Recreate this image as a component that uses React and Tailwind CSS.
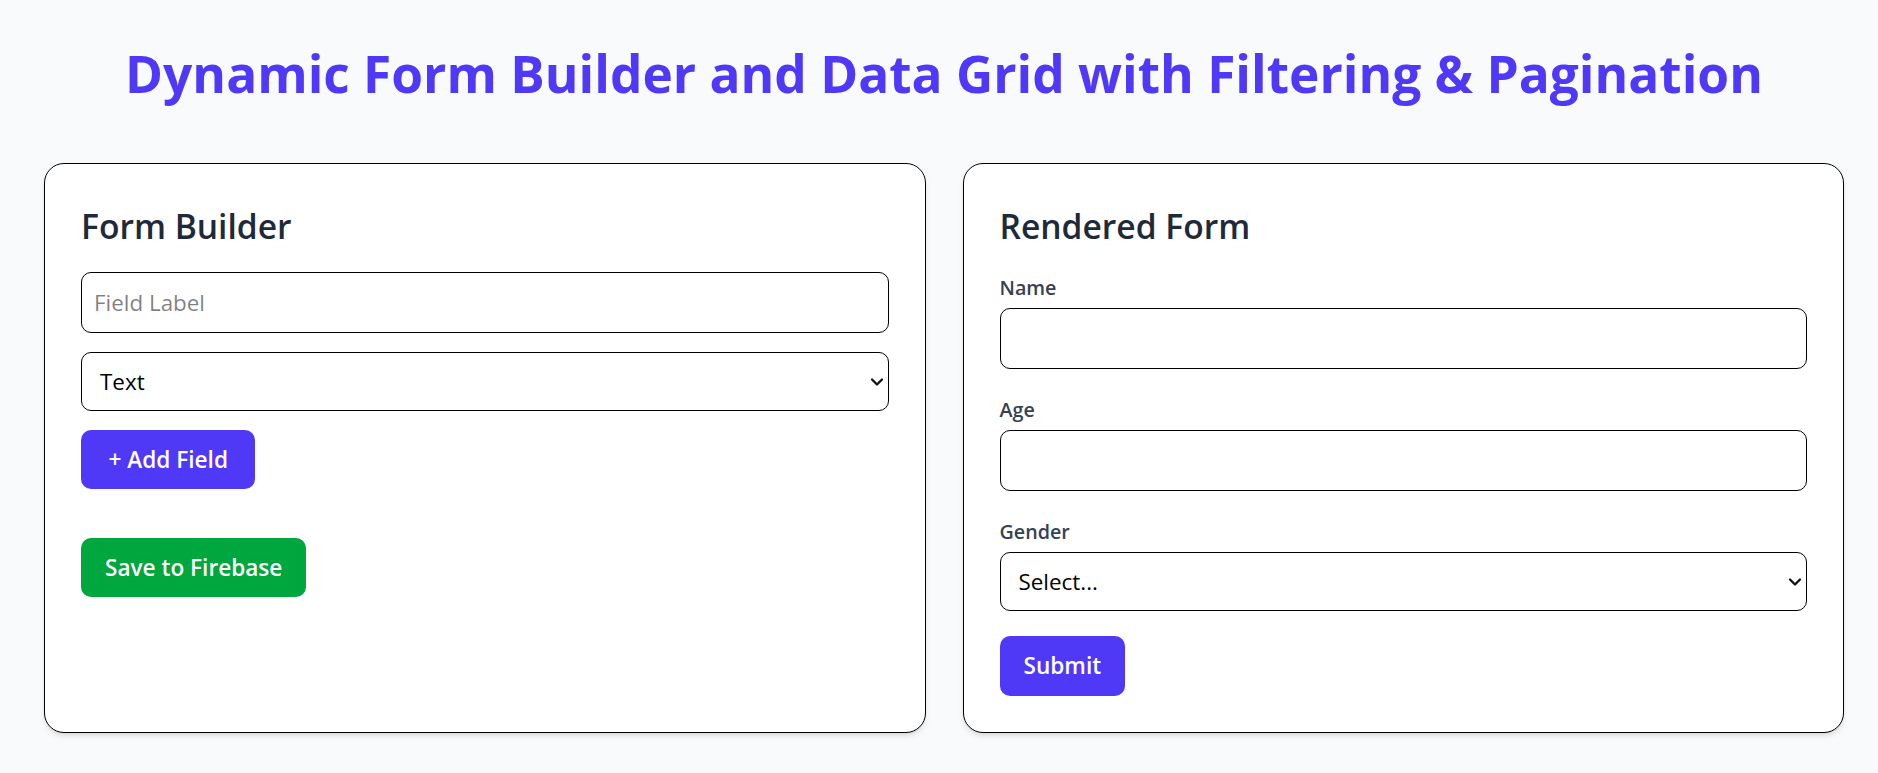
import React, { useState } from "react";

const FONT = { fontFamily: '"Open Sans", "Noto Sans", sans-serif' };

function Chevron() {
  return (
    <svg
      className="pointer-events-none absolute right-[5px] top-1/2 -translate-y-1/2"
      width="14"
      height="9"
      viewBox="0 0 14 9"
      fill="none"
      stroke="#111"
      strokeWidth="2.3"
      strokeLinecap="round"
      strokeLinejoin="round"
    >
      <polyline points="2,2 7,7 12,2" />
    </svg>
  );
}

function Select({ className = "", children, ...rest }) {
  return (
    <div className={"relative " + className}>
      <select
        {...rest}
        className="w-full h-[59px] appearance-none pl-[18px] pr-[30px] border border-black rounded-[10px] bg-white text-[22.4px] text-black"
      >
        {children}
      </select>
      <Chevron />
    </div>
  );
}

function Field({ label, type, options, last }) {
  return (
    <div className={last ? "mb-[25px]" : "mb-[26px]"}>
      <label className="block mb-[5px] text-[19.7px] leading-[30px] font-semibold text-[#364153]">
        {label}
      </label>
      {type === "select" ? (
        <Select>
          <option>Select...</option>
          {options.map((o) => (
            <option key={o}>{o}</option>
          ))}
        </Select>
      ) : (
        <input
          type={type}
          className="w-full h-[61px] px-[12px] border border-black rounded-[10px] bg-white text-[22.4px] text-black"
        />
      )}
    </div>
  );
}

export default function App() {
  const [label, setLabel] = useState("");
  const [fieldType, setFieldType] = useState("text");

  return (
    <div style={FONT} className="min-h-screen bg-[#f9fafb] pl-[44px] pr-[34px] pt-[48px] pb-10">
      <h1 className="text-center text-[51.4px] leading-none font-bold text-[#4f39f6]">
        Dynamic Form Builder and Data Grid with Filtering &amp; Pagination
      </h1>

      <div className="grid grid-cols-2 gap-[37px] mt-[64px]">
        {/* builder */}
        <div className="bg-white border border-black rounded-[20px] shadow-md px-[36px] pt-[40px] pb-[36px]">
          <h2 className="text-[33.6px] leading-[45px] font-semibold text-[#1e2939] mb-[23px]">Form Builder</h2>
          <input
            value={label}
            onChange={(e) => setLabel(e.target.value)}
            placeholder="Field Label"
            className="w-full h-[61px] px-[12px] mb-[19px] border border-black rounded-[10px] bg-white text-[22.4px] text-black"
          />
          <Select
            className="mb-[19px]"
            value={fieldType}
            onChange={(e) => setFieldType(e.target.value)}
          >
            <option value="text">Text</option>
            <option value="number">Number</option>
            <option value="select">Dropdown</option>
          </Select>
          <button className="block h-[59px] px-[27.5px] rounded-[10px] bg-[#4f39f6] text-white text-[22.6px] font-semibold">
            + Add Field
          </button>
          <button className="block mt-[49px] h-[59px] px-[24px] rounded-[10px] bg-[#00a63e] text-white text-[22.6px] font-semibold">
            Save to Firebase
          </button>
        </div>

        {/* rendered */}
        <div className="bg-white border border-black rounded-[20px] shadow-md px-[36px] pt-[40px] pb-[36px]">
          <h2 className="text-[33.6px] leading-[45px] font-semibold text-[#1e2939] mb-[24px]">Rendered Form</h2>
          <Field label="Name" type="text" />
          <Field label="Age" type="number" />
          <Field label="Gender" type="select" options={["Male", "Female", "Other"]} last />
          <button className="block h-[60px] px-[24px] rounded-[10px] bg-[#4f39f6] text-white text-[22.6px] font-semibold">
            Submit
          </button>
        </div>
      </div>
    </div>
  );
}
